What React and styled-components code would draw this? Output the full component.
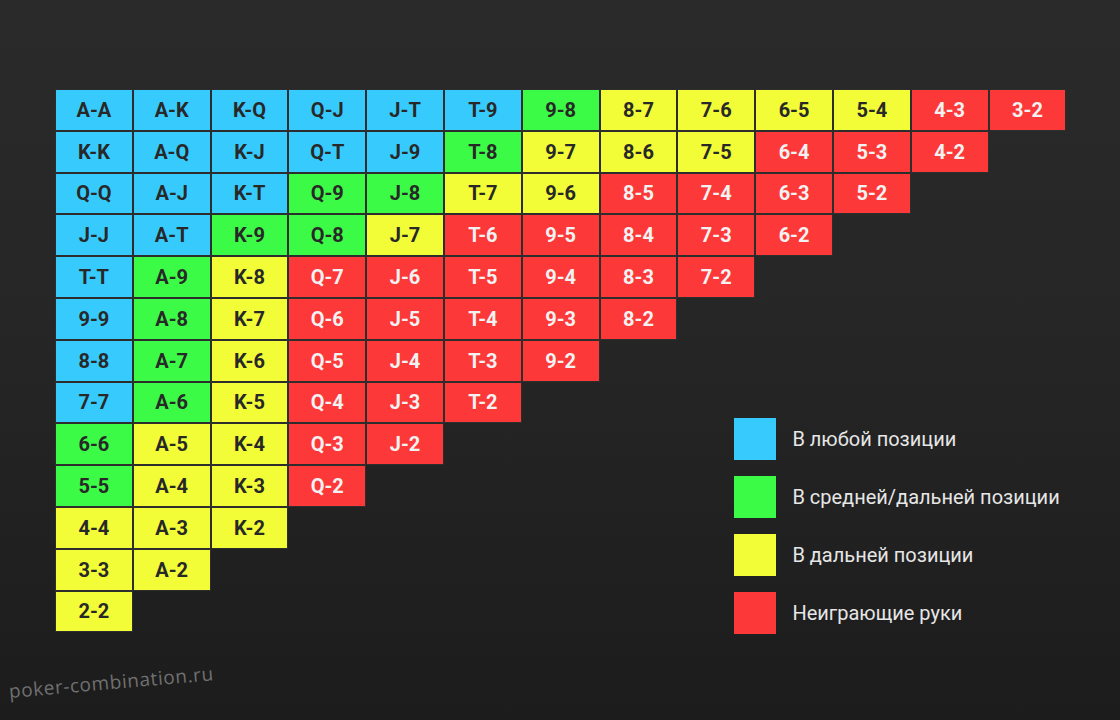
import React from 'react'
import styled, { createGlobalStyle } from 'styled-components'

const GlobalStyle = createGlobalStyle`
    html, body {
        margin: 0;
        padding: 0;
        background: #1c1c1c;
    }
    * { box-sizing: border-box; }
`

const COLORS = {
    b: '#37cbfd',
    g: '#3cfb46',
    y: '#f2fc37',
    r: '#fd3838',
}

const rows = [
    'A-A b,A-K b,K-Q b,Q-J b,J-T b,T-9 b,9-8 g,8-7 y,7-6 y,6-5 y,5-4 y,4-3 r,3-2 r',
    'K-K b,A-Q b,K-J b,Q-T b,J-9 b,T-8 g,9-7 y,8-6 y,7-5 y,6-4 r,5-3 r,4-2 r',
    'Q-Q b,A-J b,K-T b,Q-9 g,J-8 g,T-7 y,9-6 y,8-5 r,7-4 r,6-3 r,5-2 r',
    'J-J b,A-T b,K-9 g,Q-8 g,J-7 y,T-6 r,9-5 r,8-4 r,7-3 r,6-2 r',
    'T-T b,A-9 g,K-8 y,Q-7 r,J-6 r,T-5 r,9-4 r,8-3 r,7-2 r',
    '9-9 b,A-8 g,K-7 y,Q-6 r,J-5 r,T-4 r,9-3 r,8-2 r',
    '8-8 b,A-7 g,K-6 y,Q-5 r,J-4 r,T-3 r,9-2 r',
    '7-7 b,A-6 g,K-5 y,Q-4 r,J-3 r,T-2 r',
    '6-6 g,A-5 y,K-4 y,Q-3 r,J-2 r',
    '5-5 g,A-4 y,K-3 y,Q-2 r',
    '4-4 y,A-3 y,K-2 y',
    '3-3 y,A-2 y',
    '2-2 y',
].map((r) => r.split(',').map((c) => {
    const [hand, kind] = c.split(' ')
    return { hand, kind }
}))

const legend = [
    { kind: 'b', text: 'В любой позиции' },
    { kind: 'g', text: 'В средней/дальней позиции' },
    { kind: 'y', text: 'В дальней позиции' },
    { kind: 'r', text: 'Неиграющие руки' },
]

const Page = styled.div`
    position: relative;
    width: 1120px;
    height: 720px;
    overflow: hidden;
    background: linear-gradient(180deg, #2a2a2a 0%, #262626 45%, #1c1c1c 100%);
    padding: 89px 0 0 55px;
    font-family: Roboto, "Liberation Sans", sans-serif;
`

const Board = styled.div`
    display: grid;
    grid-template-columns: repeat(13, 77.8px);
    grid-template-rows: repeat(13, 41.8px);
`

const Cell = styled.div`
    grid-column: ${(p) => p.$col + 1};
    grid-row: ${(p) => p.$row + 1};
    display: flex;
    align-items: center;
    justify-content: center;
    border: 1px solid #2d2d2d;
    background: ${(p) => COLORS[p.$kind]};
    color: ${(p) => (p.$kind === 'r' ? '#f2f2f2' : '#282828')};
    font-size: 20px;
    font-weight: 700;
`

const Legend = styled.div`
    grid-column: 9 / 14;
    grid-row: 8 / 14;
    display: flex;
    flex-direction: column;
    gap: 16px;
    padding: 36px 0 0 57px;
`

const LegendItem = styled.div`
    display: flex;
    align-items: center;
    gap: 16px;
`

const Swatch = styled.div`
    width: 42px;
    height: 42px;
    flex: none;
    background: ${(p) => COLORS[p.$kind]};
`

const LegendText = styled.span`
    color: #e6e6e6;
    font-size: 20px;
    white-space: nowrap;
`

const Watermark = styled.div`
    position: absolute;
    left: 10px;
    top: 678px;
    color: #707070;
    font-family: "Open Sans", Lato, sans-serif;
    font-size: 19px;
    letter-spacing: 0.6px;
    transform: rotate(-5deg);
    transform-origin: left bottom;
`

export default function App() {
    return (
        <Page>
            <GlobalStyle />
            <Board>
                {rows.map((row, ri) =>
                    row.map((c, ci) => (
                        <Cell key={c.hand} $row={ri} $col={ci} $kind={c.kind}>
                            {c.hand}
                        </Cell>
                    ))
                )}
                <Legend>
                    {legend.map((l) => (
                        <LegendItem key={l.kind}>
                            <Swatch $kind={l.kind} />
                            <LegendText>{l.text}</LegendText>
                        </LegendItem>
                    ))}
                </Legend>
            </Board>
            <Watermark>poker-combination.ru</Watermark>
        </Page>
    )
}
